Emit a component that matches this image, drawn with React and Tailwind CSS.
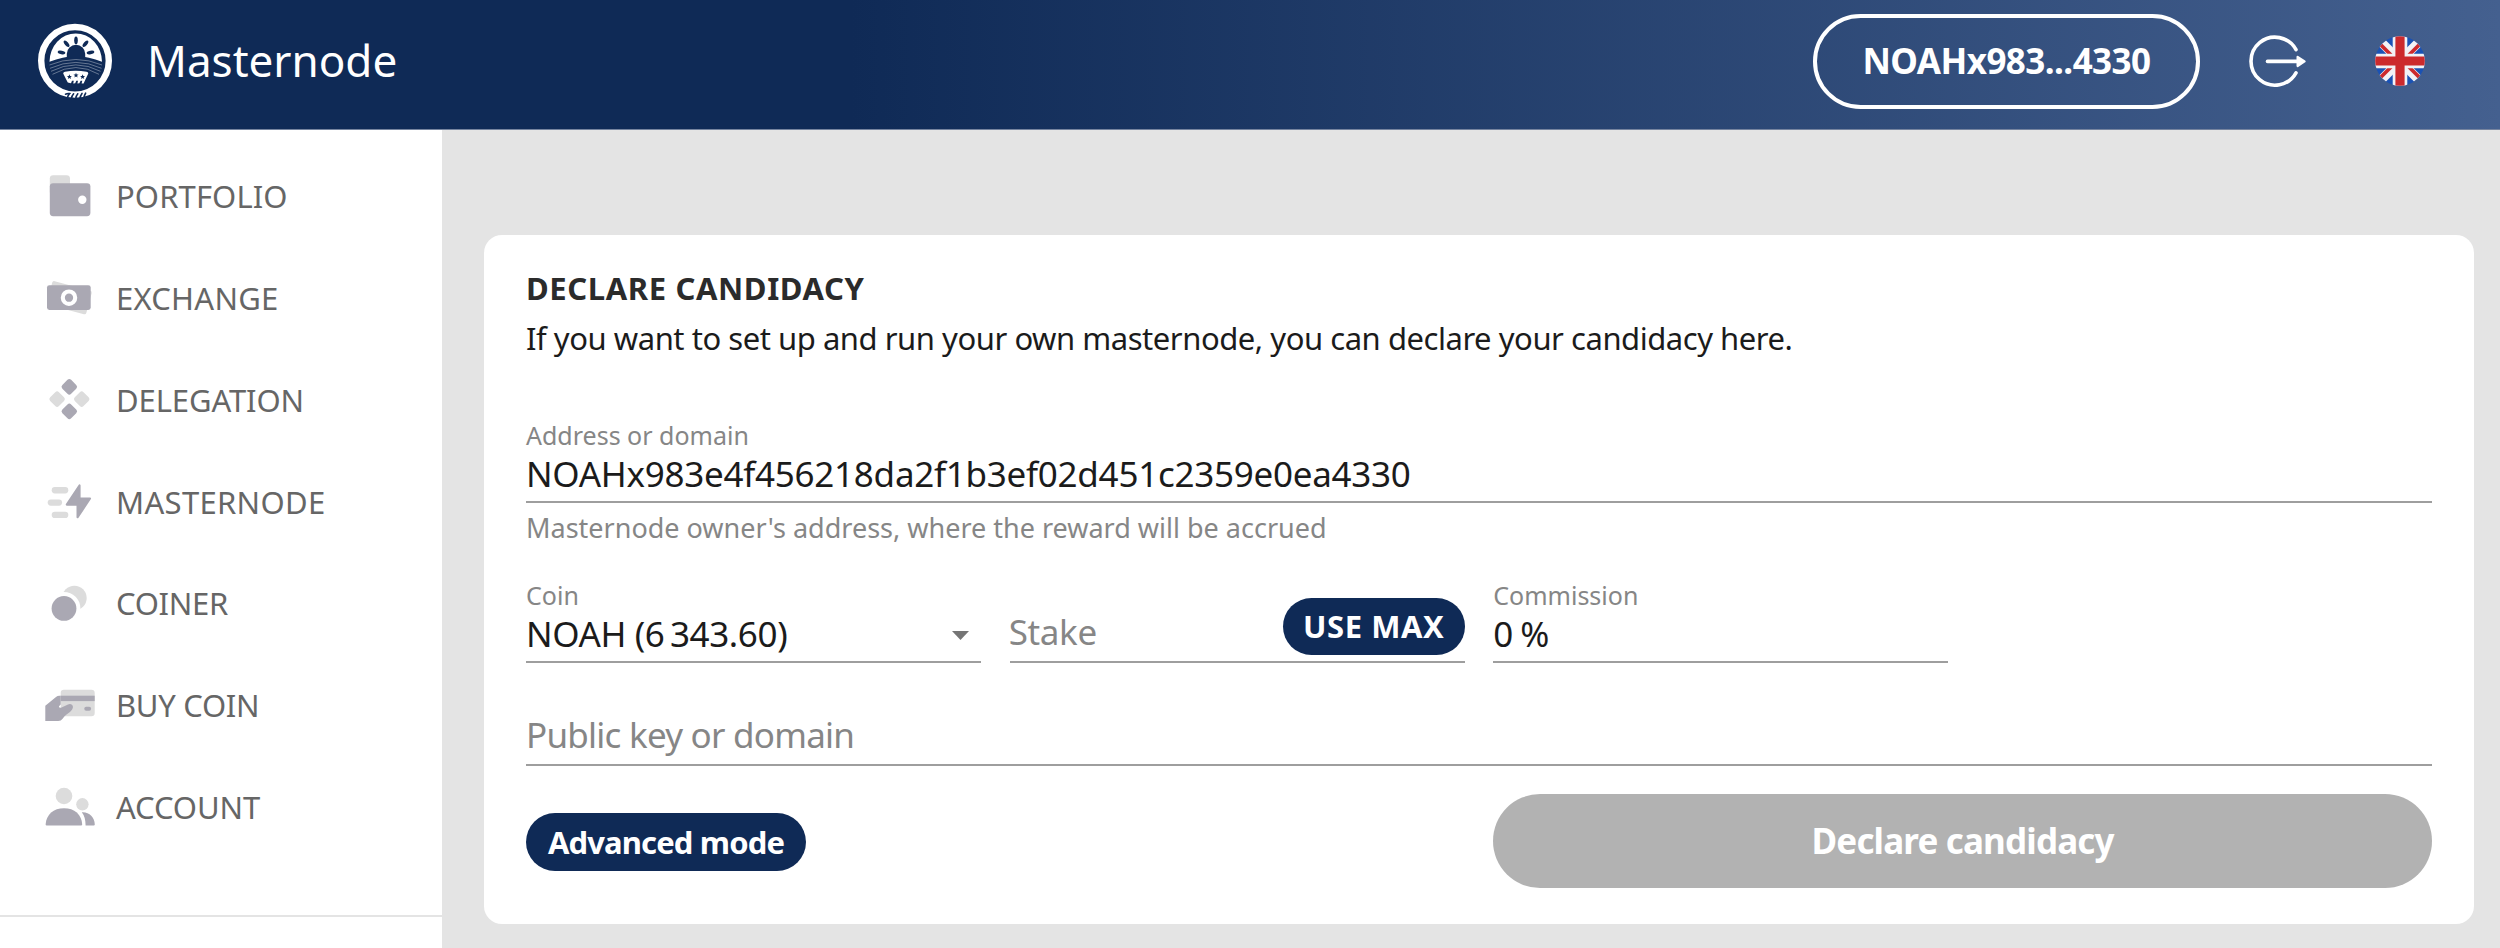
const DARK = "#aaa8b3";
const LIGHT = "#dcdcdc";

function Logo() {
  const rays = [-80, -40, 0, 40, 80];
  const navy = "#0f2a56";
  return (
    <svg className="h-20 w-20 shrink-0" viewBox="0 1 80 80" fill="none">
      <circle cx="39" cy="40.8" r="33.8" stroke="#fff" strokeWidth="6.4" />
      <path d="M13.5 41.8A26.25 28.4 0 0 1 66 41.8Q40 30.5 13.5 41.8Z" fill="#fff" />
      <path d="M30.8 37V33.8a9.2 9 0 0 1 18.4 0V37Z" fill={navy} />
      {rays.map((a) => (
        <ellipse key={a} cx="40" cy="20.3" rx="1.8" ry="3.9" fill={navy} transform={`rotate(${a} 40 35)`} />
      ))}
      <g stroke="#fff" strokeOpacity="0.45" strokeWidth="0.8">
        <path d="M13.5 45Q40 34 66 45" />
        <path d="M14 48.3Q40 36.5 65.5 48.3" />
        <path d="M15 51.3Q40 38.5 64.5 51.3" />
        <path d="M16.5 54.3Q40 40.8 63 54.3" />
      </g>
      <path
        d="M27.2 53.4Q27.4 52 29 51.7Q39.7 49.6 50.5 51.7Q52.2 52 52.3 53.4L49.2 60L47.6 63.4L45.6 63.6L46.3 60.8L44.6 60.8L43.4 63.3L41.4 63.6L42 60.8L40.3 60.8L39.2 63.3L37.2 63.6L37.8 60.8L36 60.8L35 63.3L31.8 62.4L30.2 59.5Z"
        fill="#fff"
      />
      {[33.4, 40, 46.6].map((x, i) => (
        <path
          key={x}
          d="M0-2.6L.7-.8L2.5-.8L1.1.4L1.6 2.2L0 1.1L-1.6 2.2L-1.1.4L-2.5-.8L-.7-.8Z"
          fill={navy}
          transform={`translate(${x} ${i === 1 ? 55.3 : 56.8})`}
        />
      ))}
      <g stroke={navy} strokeWidth="1.6" strokeLinecap="round">
        <path d="M29.5 74.2Q31.5 73.2 33.5 73.6Q31.6 75.5 31 79" />
        <path d="M37.6 73.8Q35.8 75.8 35.2 79" />
        <path d="M41.8 73.8Q40 75.8 39.6 79" />
        <path d="M46 73.4Q44.4 75.4 43.8 79" />
        <path d="M49.6 73.2Q48.4 75 47.8 78" />
      </g>
    </svg>
  );
}

function LogoutIcon() {
  return (
    <svg className="h-16 w-16 shrink-0" viewBox="0 0 64 64" fill="none" stroke="#fff" strokeLinecap="round" strokeLinejoin="round">
      <path d="M50 20.6A24 24 0 1 0 50 43.8" strokeWidth="3.6" />
      <path d="M21.5 32.4H52" strokeWidth="3.6" />
      <path d="M51.6 27.8L58.6 32.4L51.6 37Z" fill="#fff" strokeWidth="2.2" />
    </svg>
  );
}

function FlagIcon() {
  return (
    <svg className="h-[50px] w-[50px] shrink-0" viewBox="0 0 50 50" fill="none">
      <defs>
        <clipPath id="flag">
          <circle cx="25" cy="25" r="24.8" />
        </clipPath>
      </defs>
      <g clipPath="url(#flag)">
        <rect width="50" height="50" fill="#1a52b5" />
        <path d="M0 0L50 50M50 0L0 50" stroke="#f2f2f6" strokeWidth="9.2" />
        <path d="M2 5L18 21M48 5L32 21M2 45L18 29M48 45L32 29" stroke="#cc2a2d" strokeWidth="3.8" />
        <path d="M25 0V50M0 25H50" stroke="#f2f2f6" strokeWidth="14.6" />
        <path d="M25 0V50M0 25H50" stroke="#cc2a2d" strokeWidth="9.2" />
      </g>
    </svg>
  );
}

const icons = {
  portfolio: (
    <>
      <rect x="9.8" y="3.2" width="20.2" height="20" rx="3.4" fill={LIGHT} />
      <rect x="9.8" y="11.2" width="40.6" height="33" rx="3.4" fill={DARK} />
      <circle cx="42.3" cy="27.8" r="4.2" fill="#fff" />
    </>
  ),
  exchange: (
    <>
      <rect x="8.9" y="11.5" width="40.8" height="24.4" rx="2" fill={LIGHT} transform="rotate(15 29.3 23.7)" />
      <rect x="7" y="11.2" width="43.7" height="24.8" rx="2.4" fill={DARK} />
      <circle cx="29" cy="23.7" r="6.2" stroke="#fff" strokeWidth="4.1" />
    </>
  ),
  delegation: (
    <>
      <rect x="23.1" y="4.6" width="12.4" height="12.4" rx="2.6" fill={DARK} transform="rotate(45 29.3 10.8)" />
      <rect x="23.1" y="29.2" width="12.4" height="12.4" rx="2.6" fill={DARK} transform="rotate(45 29.3 35.4)" />
      <rect x="10.9" y="16.9" width="12.4" height="12.4" rx="2.6" fill={LIGHT} transform="rotate(45 17.1 23.1)" />
      <rect x="35.5" y="16.9" width="12.4" height="12.4" rx="2.6" fill={LIGHT} transform="rotate(45 41.7 23.1)" />
    </>
  ),
  masternode: (
    <>
      <rect x="11.7" y="9.1" width="16.6" height="6.3" rx="3.1" fill={LIGHT} />
      <rect x="7.7" y="21.4" width="14.4" height="6.3" rx="3.1" fill={LIGHT} />
      <rect x="11.7" y="33.7" width="16.6" height="6.3" rx="3.1" fill={LIGHT} />
      <path d="M39.5 7.5L39.5 20.5L50 20.5L37.6 39.2L37.6 26.6L26.8 26.6Z" fill={DARK} stroke={DARK} strokeWidth="2.2" strokeLinejoin="round" />
    </>
  ),
  coiner: (
    <>
      <circle cx="34.4" cy="19" r="12.3" fill={LIGHT} />
      <circle cx="24" cy="29.4" r="16.4" fill="#fff" />
      <circle cx="24" cy="29.4" r="12.4" fill={DARK} />
    </>
  ),
  buy: (
    <>
      <rect x="20.7" y="8.7" width="34" height="26.6" rx="3.2" fill={LIGHT} />
      <rect x="20.7" y="14.7" width="34" height="5.4" fill={DARK} />
      <rect x="44.3" y="25.8" width="6.8" height="3.9" rx="1.9" fill={DARK} />
      <path
        d="M5.3 24.7L16 15.9Q17.5 14.7 19.2 14.7H20.7V23.4L19 25.2Q18.8 27 21 26.8L28 23.4Q30.6 22.6 32.2 24.1Q33.8 26 32 28.8Q30.6 31 26.5 33.6Q24.6 34.8 22.6 37.8Q21 40 18.3 40H5.3Z"
        fill={DARK}
      />
    </>
  ),
  account: (
    <>
      <circle cx="24" cy="13" r="8.3" fill={LIGHT} />
      <circle cx="42.4" cy="21.3" r="6.2" fill={LIGHT} />
      <path d="M5.6 41.4C6.3 31.5 13.5 25.3 24 25.3C34.5 25.3 41.6 31.5 42.2 41.4Q42.1 42.4 41.1 42.4H6.7Q5.7 42.4 5.6 41.4Z" fill={DARK} />
      <path d="M41.8 29.3C49 28.7 54.5 34 54.8 41.4Q54.7 42.4 53.8 42.4H45.6C45.5 37 44.6 32.6 41.8 29.3Z" fill={DARK} />
    </>
  ),
};

const menu = [
  { label: "PORTFOLIO", icon: "portfolio", cls: "tracking-[0.1px]" },
  { label: "EXCHANGE", icon: "exchange", cls: "tracking-[0.25px]" },
  { label: "DELEGATION", icon: "delegation", cls: "tracking-[-0.1px]" },
  { label: "MASTERNODE", icon: "masternode", cls: "tracking-[0.32px]" },
  { label: "COINER", icon: "coiner", cls: "tracking-[-0.3px]" },
  { label: "BUY COIN", icon: "buy", cls: "tracking-[-0.3px]" },
  { label: "ACCOUNT", icon: "account", cls: "tracking-[-0.09px]" },
];

function Header() {
  return (
    <header className="flex h-[130px] shrink-0 items-center border-b border-[#76849f] bg-[linear-gradient(to_right,#0f2a56_0%,#0f2a56_34%,#44608f_100%)] pr-[75px] pb-[7px] pl-9 text-white">
      <Logo />
      <h1 className="-mt-0.5 ml-[31px] text-[44px] leading-[60px]">Masternode</h1>
      <button className="ml-auto flex h-[95px] w-[387px] items-center justify-center rounded-full border-4 border-white text-[35px] leading-[46px] font-bold tracking-[-0.55px]">
        NOAHx983...4330
      </button>
      <div className="ml-[46px]">
        <LogoutIcon />
      </div>
      <div className="ml-[65px]">
        <FlagIcon />
      </div>
    </header>
  );
}

function Sidebar() {
  return (
    <aside className="w-[442px] shrink-0 bg-white pt-[15.6px]">
      <nav>
        {menu.map((m) => (
          <a key={m.label} className="flex h-[101.7px] items-center gap-4 pl-10 text-[31px] leading-[46px] text-[#666]">
            <svg className="h-12 w-[60px] shrink-0" viewBox="0 0 60 48" fill="none">
              {icons[m.icon]}
            </svg>
            <span className={m.cls}>{m.label}</span>
          </a>
        ))}
      </nav>
      <div className="mt-[57.4px] h-0.5 bg-[#e4e4e4]" />
    </aside>
  );
}

function Field({ label, children }) {
  return (
    <div className="border-b-2 border-[#9e9e9e] pb-1">
      <div className="text-[25px] leading-[30px] text-[#868686]">{label}</div>
      <div className="pt-px">{children}</div>
    </div>
  );
}

export default function App() {
  return (
    <div className="flex h-[948px] w-[2500px] flex-col overflow-hidden bg-[#e4e4e4] font-['Noto_Sans',sans-serif] whitespace-nowrap">
      <Header />
      <div className="flex flex-1">
        <Sidebar />
        <main className="flex-1 pt-[105px] pr-[26px] pl-[42px]">
          <section className="h-[688.5px] rounded-[18px] bg-white px-[42px] pt-7 text-[#1b1b1b]">
            <h2 className="text-[31px] leading-[50px] font-bold tracking-[0.62px] text-[#2b2b2b]">DECLARE CANDIDACY</h2>
            <p className="text-[31px] leading-[50px] tracking-[-0.46px]">
              If you want to set up and run your own masternode, you can declare your candidacy here.
            </p>

            <div className="mt-[57px]">
              <Field label="Address or domain">
                <div className="text-[35px] leading-[46px] tracking-[-0.26px]">NOAHx983e4f456218da2f1b3ef02d451c2359e0ea4330</div>
              </Field>
              <div className="pt-0.5 text-[27px] leading-[46px] text-[#868686]">Masternode owner's address, where the reward will be accrued</div>
            </div>

            <div className="mt-[29px] grid grid-cols-4 gap-x-[28.5px]">
              <Field label="Coin">
                <div className="flex items-center justify-between pr-3">
                  <span className="text-[35px] leading-[46px] tracking-[-0.38px]">NOAH (6{"\u2009"}343.60)</span>
                  <svg className="mt-0.5 h-[9px] w-[17px]" viewBox="0 0 17 9">
                    <path d="M0 0H17L8.5 9Z" fill="#757575" />
                  </svg>
                </div>
              </Field>
              <div className="flex items-end justify-between border-b-2 border-[#9e9e9e]">
                <span className="mb-1.5 -ml-px text-[35px] leading-[46px] tracking-[-0.35px] text-[#868686]">Stake</span>
                <button className="mb-1.5 flex h-[57px] w-[182px] items-center justify-center rounded-full bg-[#0f2a56] pb-px text-[31px] leading-[46px] font-bold tracking-[0.56px] text-white">
                  USE MAX
                </button>
              </div>
              <Field label="Commission">
                <div className="text-[35px] leading-[46px] tracking-[-1.06px]">0 %</div>
              </Field>
            </div>

            <div className="mt-[49px] border-b-2 border-[#9e9e9e] pb-1.5">
              <div className="text-[35px] leading-[46px] tracking-[-0.76px] text-[#868686]">Public key or domain</div>
            </div>

            <div className="mt-7 grid grid-cols-4 items-center gap-x-[28.5px]">
              <div className="col-span-2 pt-px">
                <button className="flex h-[58px] w-[280px] items-center justify-center rounded-full bg-[#0f2a56] text-[31px] leading-[46px] font-bold tracking-[-0.86px] text-white">
                  Advanced mode
                </button>
              </div>
              <button className="col-span-2 h-[94px] rounded-full bg-[#b2b2b2] text-[35px] leading-[46px] font-bold tracking-[-0.84px] text-white">
                Declare candidacy
              </button>
            </div>
          </section>
        </main>
      </div>
    </div>
  );
}
